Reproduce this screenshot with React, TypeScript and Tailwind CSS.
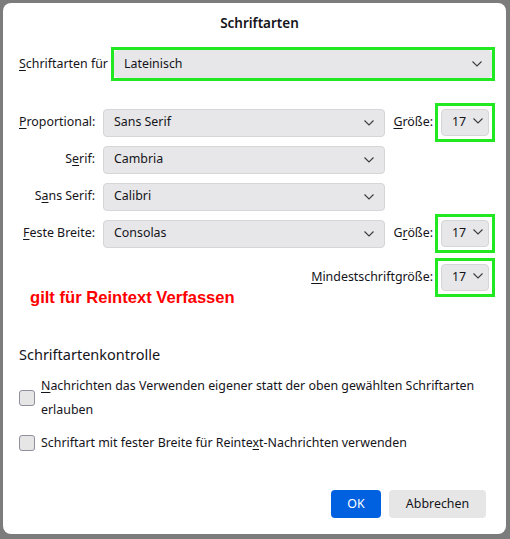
import React from 'react';

const font = { fontFamily: '"Noto Sans", "Open Sans", sans-serif' };

function Chevron({ className = '' }: { className?: string }) {
  return (
    <svg width="10" height="6" viewBox="0 0 10 6" className={className}>
      <path d="M0.5 0.5 L5 5 L9.5 0.5" fill="none" stroke="#3b3b3b" strokeWidth="1.1" />
    </svg>
  );
}

function Select({ value, className = '' }: { value: string; className?: string }) {
  return (
    <div className={`flex items-center justify-between h-[28px] bg-[#e7e7e9] border border-[#d6d6d8] rounded-[4px] pl-[10px] pr-[10px] shrink-0 ${className}`}>
      <span>{value}</span>
      <Chevron />
    </div>
  );
}

function SizeBox() {
  return (
    <div className="border-[3px] border-[#22e822] p-[3px] shrink-0">
      <div className="flex items-center gap-[7px] h-[27px] w-[48px] bg-[#e7e7e9] border border-[#d6d6d8] rounded-[4px] pl-[10px]">
        <span>17</span>
        <Chevron className="mt-[-3px]" />
      </div>
    </div>
  );
}

function U({ children }: { children: React.ReactNode }) {
  return <span className="underline underline-offset-2">{children}</span>;
}

function FontRow({ label, value, size }: { label: React.ReactNode; value: string; size?: React.ReactNode }) {
  return (
    <div className="flex items-center h-[37px]">
      <div className="w-[76px] shrink-0 text-right whitespace-nowrap">{label}</div>
      <Select value={value} className="ml-[8px] w-[282px]" />
      {size && (
        <div className="flex items-center ml-auto">
          <span className="mr-[2px] whitespace-nowrap">{size}</span>
          <SizeBox />
        </div>
      )}
    </div>
  );
}

function Check({ children }: { children: React.ReactNode }) {
  return (
    <div className="flex items-center gap-[6px]">
      <div className="w-[16px] h-[16px] shrink-0 bg-[#e6e6e6] border border-[#8f8f9d] rounded-[3px]" />
      <div className="leading-[24px]">{children}</div>
    </div>
  );
}

export default function App() {
  return (
    <div className="w-[510px] h-[539px] bg-[#7c7c7c] pl-[3px] pt-[3px]" style={font}>
      <div className="relative w-[503px] h-[531px] bg-white rounded-[8px] flex flex-col pl-[16px] pr-[11px] text-[12.4px] text-[#15141a]">
        <div className="text-center text-[13.5px] font-semibold pt-[10px] leading-[20px] pl-[5px]">Schriftarten</div>

        <div className="flex items-center mt-[14px]">
          <span className="whitespace-nowrap w-[84px] shrink-0"><U>S</U>chriftarten für</span>
          <div className="ml-[8px] border-[3px] border-[#22e822] w-[384px] shrink-0">
            <Select value="Lateinisch" className="h-[27px] border-0 rounded-[3px] w-full" />
          </div>
        </div>

        <div className="mt-[23px]">
          <FontRow label={<><U>P</U>roportional:</>} value="Sans Serif" size={<><U>G</U>röße:</>} />
          <FontRow label={<>S<U>e</U>rif:</>} value="Cambria" />
          <FontRow label={<>S<U>a</U>ns Serif:</>} value="Calibri" />
          <FontRow label={<><U>F</U>este Breite:</>} value="Consolas" size={<>G<U>r</U>öße:</>} />
          <div className="flex items-center justify-end h-[39px] mt-[6px]">
            <span className="mr-[2px]"><U>M</U>indestschriftgröße:</span>
            <SizeBox />
          </div>
        </div>

        <div
          className="absolute left-[27px] top-[283px] text-[16.6px] font-bold text-[#ff0000]"
          style={{ fontFamily: '"Liberation Sans", Arial, sans-serif' }}
        >
          gilt für Reintext Verfassen
        </div>

        <div className="mt-[47px] text-[14.5px] leading-[20px]">Schriftartenkontrolle</div>

        <div className="mt-[10px]">
          <Check>
            <U>N</U>achrichten das Verwenden eigener statt der oben gewählten Schriftarten<br />erlauben
          </Check>
        </div>
        <div className="mt-[9px]">
          <Check>
            Schriftart mit fester Breite für Reinte<U>x</U>t-Nachrichten verwenden
          </Check>
        </div>

        <div className="mt-auto mb-[16px] flex justify-end gap-[8px] pr-[9px]">
          <button className="h-[28px] w-[50px] rounded-[4px] bg-[#0061e0] text-white">OK</button>
          <button className="h-[28px] w-[97px] rounded-[4px] bg-[#e6e6e6] text-[#15141a]">Abbrechen</button>
        </div>
      </div>
    </div>
  );
}
